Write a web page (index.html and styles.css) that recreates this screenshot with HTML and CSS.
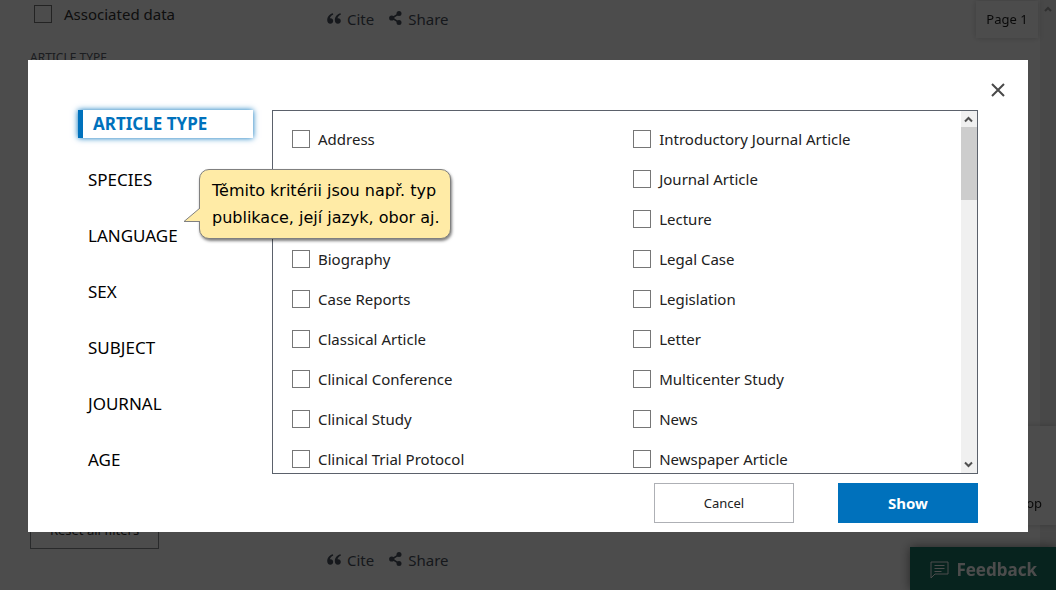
FILE: index.html
```html
<!DOCTYPE html>
<html lang="en">
<head>
<meta charset="utf-8">
<title>Additional filters</title>
<link rel="stylesheet" href="styles.css">
</head>
<body>
<svg class="sprite" aria-hidden="true">
  <symbol id="quote" viewBox="0 0 14 11">
    <path d="M6 .3C3 .8.2 3.4.2 7c0 2.300 1.200 3.800 3.100 3.800 1.700 0 2.900-1.200 2.900-2.800S5.100 5.300 3.600 5.300c-.3 0-.5 0-.7.1C3.100 3.700 4.400 2.400 6.200 1.800zM13.600.3C10.600.8 7.800 3.400 7.800 7c0 2.300 1.200 3.800 3.100 3.800 1.700 0 2.900-1.200 2.900-2.800s-1.100-2.700-2.600-2.700c-.3 0-.5 0-.7.1.2-1.700 1.500-3 3.300-3.600z"/>
  </symbol>
  <symbol id="share" viewBox="0 0 13 14">
    <path d="M10 2.600 3 7l7 4.400" fill="none" stroke="currentColor" stroke-width="1.700"/>
    <circle cx="10" cy="2.600" r="2.500"/><circle cx="2.700" cy="7" r="2.600"/><circle cx="10" cy="11.400" r="2.500"/>
  </symbol>
</svg>

<div class="page">
  <aside class="sidebar">
    <label class="check"><input type="checkbox"><span>Associated data</span></label>
    <h2 class="sidebar-title">ARTICLE TYPE</h2>
    <button class="reset" type="button">Reset all filters</button>
  </aside>
  <main class="results">
    <div class="actions">
      <button type="button"><svg class="quote"><use href="#quote"/></svg>Cite</button>
      <button type="button"><svg class="share"><use href="#share"/></svg>Share</button>
    </div>
    <div class="actions">
      <button type="button"><svg class="quote"><use href="#quote"/></svg>Cite</button>
      <button type="button"><svg class="share"><use href="#share"/></svg>Share</button>
    </div>
  </main>
  <div class="page-scroll"><svg width="8" height="6" viewBox="0 0 8 6"><path d="M1 5l3-3 3 3"/></svg></div>
</div>
<div class="page-number">Page 1</div>
<div class="to-top">Top</div>
<button class="feedback" type="button">
  <svg width="19" height="18" viewBox="0 0 19 18"><path d="M1 17V1h17v12H5zM4.500 4.500h10M4.500 7.500h10M4.500 10.500h7"/></svg>Feedback
</button>

<div class="overlay">
  <div class="dialog" role="dialog" aria-label="Additional filters">
    <button class="close" type="button" aria-label="Close"><svg width="14" height="14" viewBox="0 0 14 14"><path d="M1 1l12 12M13 1 1 13"/></svg></button>
    <div class="filters">
      <nav class="tabs">
        <button class="tab selected" type="button">ARTICLE TYPE</button>
        <button class="tab" type="button">SPECIES</button>
        <button class="tab" type="button">LANGUAGE</button>
        <button class="tab" type="button">SEX</button>
        <button class="tab" type="button">SUBJECT</button>
        <button class="tab" type="button">JOURNAL</button>
        <button class="tab" type="button">AGE</button>
      </nav>
      <div class="panel">
        <div class="options">
          <div class="column">
            <label class="check"><input type="checkbox"><span>Address</span></label>
            <label class="check below-hint"><input type="checkbox"><span>Biography</span></label>
            <label class="check"><input type="checkbox"><span>Case Reports</span></label>
            <label class="check"><input type="checkbox"><span>Classical Article</span></label>
            <label class="check"><input type="checkbox"><span>Clinical Conference</span></label>
            <label class="check"><input type="checkbox"><span>Clinical Study</span></label>
            <label class="check"><input type="checkbox"><span>Clinical Trial Protocol</span></label>
          </div>
          <div class="column">
            <label class="check"><input type="checkbox"><span>Introductory Journal Article</span></label>
            <label class="check"><input type="checkbox"><span>Journal Article</span></label>
            <label class="check"><input type="checkbox"><span>Lecture</span></label>
            <label class="check"><input type="checkbox"><span>Legal Case</span></label>
            <label class="check"><input type="checkbox"><span>Legislation</span></label>
            <label class="check"><input type="checkbox"><span>Letter</span></label>
            <label class="check"><input type="checkbox"><span>Multicenter Study</span></label>
            <label class="check"><input type="checkbox"><span>News</span></label>
            <label class="check"><input type="checkbox"><span>Newspaper Article</span></label>
          </div>
        </div>
        <div class="scrollbar">
          <svg viewBox="0 0 16 16"><path d="M4 10.500L7.500 7l3.500 3.500"/></svg>
          <div class="thumb"></div>
          <svg viewBox="0 0 16 16"><path d="M4 5.500L7.500 9 11 5.500"/></svg>
        </div>
      </div>
    </div>
    <div class="buttons">
      <button class="cancel" type="button">Cancel</button>
      <button class="show" type="button">Show</button>
    </div>
    <div class="hint">
      <svg class="tail" width="18" height="16" viewBox="0 0 18 16"><path class="tail-fill" d="M18 1 17 1 1 14.500H18z"/><path class="tail-line" d="M17 1 1 14.500H17"/></svg>
      Těmito kritérii jsou např. typ<br>publikace, její jazyk, obor aj.
    </div>
  </div>
</div>
</body>
</html>
```
FILE: styles.css
```css
* { box-sizing: border-box; }
body {
  margin: 0;
  background: #fff;
  color: #212121;
  font: 15px/20px "Noto Sans", "Open Sans", sans-serif;
  overflow: hidden;
}
button {
  margin: 0;
  padding: 0;
  border: 0;
  background: none;
  color: inherit;
  font: inherit;
}
.sprite { position: absolute; width: 0; height: 0; }

.page { display: flex; height: 100vh; color: #333; }
.sidebar {
  display: flex;
  flex-direction: column;
  align-items: flex-start;
  width: 327px;
  padding: 4px 30px 41px;
}
.sidebar > .check { padding-left: 4px; }
.sidebar > .check span { padding-left: 4px; }
.sidebar-title {
  margin: 24px 0 0;
  color: #5b616b;
  font-size: 12px;
  font-weight: 400;
  line-height: 20px;
}
.reset {
  margin-top: auto;
  width: 129px;
  height: 38px;
  border: 1px solid #8a8c90;
  font-size: 13px;
}
.results {
  flex: 1;
  display: flex;
  flex-direction: column;
  justify-content: space-between;
  padding: 9px 0 20px;
}
.actions { display: flex; gap: 15px; color: #4a525e; }
.actions button { display: flex; align-items: center; gap: 6px; }
.actions svg { fill: currentColor; }
.quote { width: 14px; height: 11px; margin-bottom: 2px; }
.share { width: 13px; height: 14px; margin-bottom: 3px; }
.page-scroll {
  width: 16px;
  padding-top: 6px;
  background: #f0f0f0;
  line-height: 0;
  text-align: center;
}
.page-scroll path { fill: none; stroke: #a0a0a0; stroke-width: 2; }

.page-number,
.to-top {
  position: fixed;
  background: #fff;
  box-shadow: 0 0 6px rgba(0, 0, 0, .2);
  text-align: center;
}
.page-number { top: 1px; right: 18px; width: 62px; font-size: 13px; line-height: 37px; }
.to-top { right: 0; bottom: 65px; width: 70px; padding: 67px 14px 12px; font-size: 13px; text-align: right; }
.feedback {
  position: fixed;
  right: 0;
  bottom: 0;
  display: flex;
  align-items: center;
  gap: 7px;
  height: 43px;
  padding: 3px 19px 0 20px;
  background: #197564;
  box-shadow: 0 0 10px rgba(0, 0, 0, .5);
  color: #fff;
  font-size: 17px;
  font-weight: 700;
}
.feedback path { fill: none; stroke: #fff; stroke-width: 1; }

.overlay {
  position: fixed;
  inset: 0;
  padding: 60px 28px 0;
  background: rgba(0, 0, 0, .7);
}
.dialog {
  position: relative;
  padding: 50px 50px 9px;
  background: #fff;
}
.close {
  position: absolute;
  top: 18px;
  right: 18px;
  display: grid;
  place-items: center;
  width: 24px;
  height: 24px;
}
.close path { fill: none; stroke: #494949; stroke-width: 2; }
.filters { display: flex; gap: 19px; }
.tabs { display: flex; flex-direction: column; gap: 28px; width: 175px; }
.tab {
  height: 28px;
  padding: 0 10px;
  color: #000;
  font-size: 17px;
  text-align: left;
}
.tab.selected {
  border-left: 5px solid #0071bc;
  box-shadow: 0 0 6px #0071bc;
  color: #0071bc;
  font-weight: 700;
}
.panel {
  flex: 1;
  display: flex;
  height: 364px;
  border: 1px solid #5b616b;
}
.options {
  flex: 1;
  display: grid;
  grid-template-columns: 51% 49%;
  padding: 8px 0 0 19px;
  overflow: hidden;
}
.check { display: flex; align-items: center; gap: 8px; }
.column .check { height: 40px; }
.column .below-hint { margin-top: 80px; }
.check input {
  appearance: none;
  width: 18px;
  height: 18px;
  margin: 0;
  border: 1px solid #767676;
  background: #fff;
}
.scrollbar {
  display: flex;
  flex-direction: column;
  width: 16px;
  background: #f0f0f0;
}
.scrollbar svg { height: 16px; }
.scrollbar path { fill: none; stroke: #505050; stroke-width: 2; }
.thumb { height: 73px; margin-bottom: auto; background: #cdcdcd; }
.buttons {
  display: flex;
  justify-content: flex-end;
  gap: 44px;
  margin-top: 9px;
}
.buttons button { width: 140px; height: 40px; }
.cancel { border: 1px solid #aeb0b5; font-size: 13px; }
.show { background: #0071bc; color: #fff; font-weight: 700; }

.hint {
  position: absolute;
  left: 171px;
  top: 109px;
  padding: 7px 10px 7px 12px;
  border: 1px solid #808080;
  border-radius: 10px;
  background: #ffeba6;
  box-shadow: 1px 2px 3px rgba(0, 0, 0, .5);
  color: #000;
  font: 16px/27px "DejaVu Sans", sans-serif;
  white-space: nowrap;
}
.tail { position: absolute; left: -17px; top: 37px; }
.tail-fill { fill: #ffeba6; }
.tail-line { fill: none; stroke: #808080; }
```
